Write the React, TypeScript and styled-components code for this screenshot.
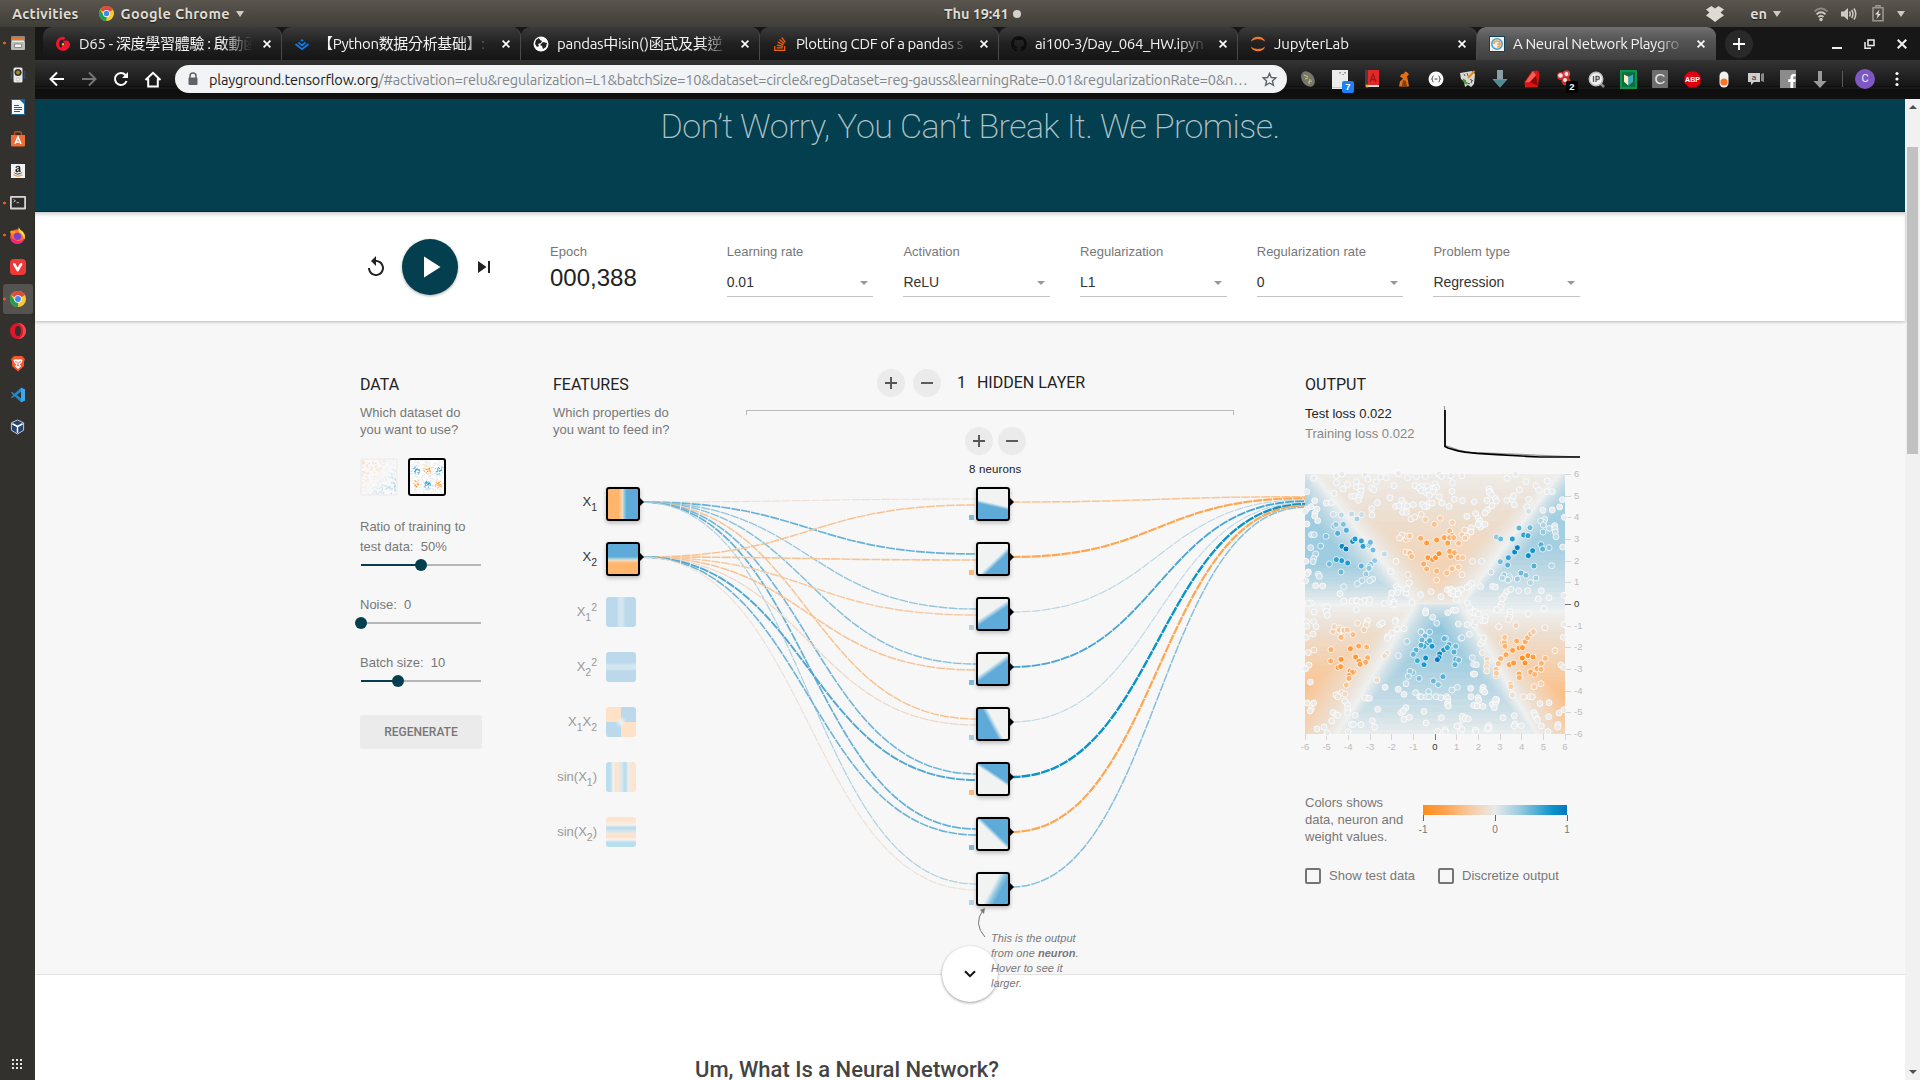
import React, { useEffect, useRef } from 'react';
import styled, { createGlobalStyle, css } from 'styled-components';
import { FaAmazon, FaFacebookF, FaGithub, FaStackOverflow } from 'react-icons/fa';

const UI = '"Ubuntu", "Noto Sans", "Noto Sans CJK TC", sans-serif';
const ARIAL = '"Helvetica", "Liberation Sans", Arial, sans-serif';
const ROBOTO = 'Roboto, sans-serif';
const TEAL = '#033f4f';

const GlobalStyle = createGlobalStyle`
  *, *::before, *::after { box-sizing: border-box; }
  html, body { margin: 0; padding: 0; overflow: hidden; }
  body { font-family: ${ARIAL}; background: #f7f7f7; }
  svg { display: block; flex: none; }
`;

/* ------------------------------------------------------------ desktop */

const Desktop = styled.div`
  width: 1920px;
  height: 1080px;
  display: flex;
  flex-direction: column;
  overflow: hidden;
`;

const TopBar = styled.header`
  height: 27px;
  flex: none;
  display: grid;
  grid-template-columns: 944px auto 1fr;
  align-items: center;
  background: linear-gradient(#5a564e, #403e39);
  color: #dfdbd2;
  font: 600 14.5px/26px ${UI};
  text-shadow: 0 1px 1px rgba(0, 0, 0, 0.6);
`;

const BarGroup = styled.div<{ $end?: boolean }>`
  display: flex;
  align-items: center;
  padding-left: 12px;
  ${(p) => p.$end && css`justify-content: flex-end; padding: 0 15px 0 0;`}
`;

const BarText = styled.span<{ $gap?: number; $track?: number }>`
  margin-left: ${(p) => p.$gap ?? 0}px;
  letter-spacing: ${(p) => p.$track ?? 0}px;
  white-space: nowrap;
`;

const BarIcon = styled.span<{ $gap: number }>`
  margin-left: ${(p) => p.$gap}px;
`;

const Caret = styled.span<{ $gap?: number }>`
  margin-left: ${(p) => p.$gap ?? 6}px;
  border: 4.5px solid transparent;
  border-top: 6px solid #cfcbc3;
  border-bottom: 0;
`;

const Clock = styled.div`
  display: flex;
  align-items: center;
  gap: 5px;
  letter-spacing: -0.1px;
`;

const ClockDot = styled.span`
  width: 8px;
  height: 8px;
  border-radius: 50%;
  background: #d5d1c9;
`;

const Workspace = styled.div`
  flex: 1;
  display: flex;
  min-height: 0;
`;

const Dock = styled.nav`
  width: 35px;
  flex: none;
  display: flex;
  flex-direction: column;
  align-items: center;
  background: #33312d;
`;

const DockItem = styled.div<{ $running?: boolean; $active?: boolean; $last?: boolean }>`
  width: 30px;
  height: 30px;
  margin: 1px 0;
  border-radius: 3px;
  display: flex;
  align-items: center;
  justify-content: center;
  background: ${(p) => (p.$active ? '#555350' : 'transparent')};
  ${(p) => p.$last && css`margin-top: auto;`}
  ${(p) => p.$running && css`
    background-image: radial-gradient(circle at 1.5px 15px, #e95420 1.2px, transparent 1.8px);
  `}
`;

/* ------------------------------------------------------------ browser */

const Browser = styled.section`
  flex: 1;
  min-width: 0;
  display: flex;
  flex-direction: column;
`;

const TabStrip = styled.div`
  height: 33px;
  flex: none;
  display: flex;
  align-items: stretch;
  background: #171717;
  padding-left: 8px;
`;

const TabBox = styled.div<{ $active?: boolean }>`
  width: 239px;
  position: relative;
  display: flex;
  align-items: center;
  padding: 1px 10px 0 12px;
  border-radius: 9px 9px 0 0;
  border-right: 1px solid ${(p) => (p.$active ? 'transparent' : '#4a4a4a')};
  background: ${(p) =>
    p.$active ? 'linear-gradient(#707070, #525252 45%, #414141)' : 'linear-gradient(#3b3b3b, #212121 50%, #151515)'};
  color: #f3f3f3;
`;

const TabTitle = styled.span<{ $track: number }>`
  flex: 1;
  margin: 0 9px 0 8px;
  overflow: hidden;
  white-space: pre;
  font: 400 15px/22px ${UI};
  letter-spacing: ${(p) => p.$track}px;
  -webkit-mask-image: linear-gradient(to right, #000 82%, transparent 99%);
  mask-image: linear-gradient(to right, #000 82%, transparent 99%);
`;

const NewTab = styled.div`
  width: 28px;
  height: 28px;
  margin: 3px 0 0 9px;
  border-radius: 50%;
  display: flex;
  align-items: center;
  justify-content: center;
  background: #292929;
`;

const WindowButtons = styled.div`
  margin-left: auto;
  display: flex;
  align-items: center;
  gap: 22px;
  padding-right: 13px;
`;

const Toolbar = styled.div`
  height: 39px;
  flex: none;
  display: flex;
  padding-left: 6px;
  background: linear-gradient(#343434, #161616 26px, #0b0b0b 27px, #242424 28px, #0e0e0e 29px, #101010);
`;

const NavSlot = styled.div<{ $gap?: number }>`
  width: 32px;
  height: 38px;
  margin-left: ${(p) => p.$gap ?? 0}px;
  display: flex;
  align-items: center;
  justify-content: center;
`;

const Omnibox = styled.div`
  width: 1112px;
  height: 28px;
  margin: 5px 0 0 6px;
  border-radius: 14px;
  padding: 0 10px 0 12px;
  display: flex;
  align-items: center;
  background: #f1f3f4;
`;

const Url = styled.span`
  flex: 1;
  margin-left: 10px;
  white-space: nowrap;
  font: 400 14.5px/27px ${UI};
  letter-spacing: -0.2px;
  color: #80868b;
`;

const Host = styled.span`
  color: #202124;
`;

const Extensions = styled.div`
  display: flex;
  margin-left: 5px;
`;

const ExtSlot = styled.div`
  width: 32px;
  height: 38px;
  position: relative;
  display: flex;
  align-items: center;
  justify-content: center;
`;

const ExtBadge = styled.span<{ $color: string }>`
  position: absolute;
  left: 18px;
  top: 21px;
  width: 12px;
  height: 12px;
  border-radius: 2px;
  background: ${(p) => p.$color};
  color: #fff;
  font: 700 9.5px/12px ${ARIAL};
  text-align: center;
`;

const ExtTile = styled.span<{ $bg: string; $fg?: string; $size?: number }>`
  width: 16px;
  height: 18px;
  border-radius: 1px;
  background: ${(p) => p.$bg};
  color: ${(p) => p.$fg ?? '#fff'};
  font: 400 ${(p) => p.$size ?? 12}px/18px ${ARIAL};
  text-align: center;
`;

const ToolbarRule = styled.span`
  width: 1px;
  height: 16px;
  margin: 11px 12px 0 6px;
  background: #5a5a5a;
`;

const Avatar = styled.div`
  width: 20px;
  height: 20px;
  margin-top: 9px;
  border-radius: 50%;
  background: #7e57c2;
  color: #f2eefa;
  font: 400 11px/20px ${ROBOTO};
  text-align: center;
`;

/* --------------------------------------------------------------- page */

const Viewport = styled.div`
  flex: 1;
  min-height: 0;
  display: flex;
`;

const Page = styled.main`
  width: 1870px;
  display: flex;
  flex-direction: column;
  background: #f7f7f7;
`;

const Hero = styled.div`
  height: 112.5px;
  flex: none;
  padding-top: 6px;
  background: ${TEAL};
  border-bottom: 1px solid #022c38;
  color: rgba(255, 255, 255, 0.7);
  font: 200 34px/42px ${ROBOTO};
  letter-spacing: -0.57px;
  text-align: center;
`;

const Controls = styled.div`
  height: 109.5px;
  flex: none;
  position: relative;
  display: flex;
  padding: 0 0 0 325px;
  background: #fff;
  box-shadow: inset 0 4px 4px -2px rgba(0, 0, 0, 0.22), 0 1px 3px rgba(0, 0, 0, 0.25);
`;

const Timeline = styled.div`
  width: 190px;
  flex: none;
  display: flex;
  align-items: center;
  padding: 1px 0 0 4px;
`;

const PlayButton = styled.div`
  width: 56px;
  height: 56px;
  margin: 0 13.5px 0 14px;
  border-radius: 50%;
  display: flex;
  align-items: center;
  justify-content: center;
  background: ${TEAL};
  box-shadow: 0 1px 3px rgba(0, 0, 0, 0.35);
`;

const Field = styled.div`
  width: 176.7px;
  flex: none;
  padding: 31.5px 30px 0 0;
`;

const FieldLabel = styled.div`
  font: 400 13px/17px ${ARIAL};
  color: #777;
`;

const Epoch = styled.div`
  margin-top: 6px;
  font: 400 24px/24px ${ARIAL};
  color: #222;
`;

const Select = styled.div`
  height: 24px;
  margin-top: 13px;
  display: flex;
  align-items: center;
  padding: 0 4px 5px 0;
  border-bottom: 1px solid #c4c4c4;
  font: 400 14px/17px ${ARIAL};
  color: #333;
`;

const SelectCaret = styled.span`
  margin: 2px 1px 0 auto;
  border: 4px solid transparent;
  border-top: 4.5px solid #999;
  border-bottom: 0;
`;

const Main = styled.div`
  height: 653px;
  flex: none;
  display: flex;
  padding: 0 325px;
`;

const ColumnTitle = styled.h4`
  margin: 0;
  padding-top: 54px;
  font: 400 16px/20px ${ROBOTO};
  color: #222;
`;

const Hint = styled.p`
  margin: 0;
  padding-top: 9px;
  font: 400 13px/17px ${ARIAL};
  color: #777;
`;

const DataColumn = styled.section`
  width: 193px;
  flex: none;
`;

const Thumbs = styled.div`
  display: flex;
  gap: 10px;
  margin-top: 20px;
`;

const Thumb = styled.div<{ $on?: boolean }>`
  width: 38px;
  height: 38px;
  border-radius: 3px;
  overflow: hidden;
  border: 2px solid ${(p) => (p.$on ? '#000' : '#f0f0f0')};
  background: ${(p) => (p.$on ? '#fff' : '#f8f8f8')};
`;

const SliderBlock = styled.div<{ $top: number }>`
  width: 122px;
  padding-top: ${(p) => p.$top}px;
  font: 400 13px/20px ${ARIAL};
  color: #777;
  white-space: pre;
`;

const Track = styled.div<{ $at: number }>`
  height: 12px;
  margin: 2px 0 0 1px;
  width: 120px;
  background: linear-gradient(${TEAL}, ${TEAL}) left center / ${(p) => p.$at}px 2px no-repeat,
    linear-gradient(#b6b6b6, #b6b6b6) center / 100% 2px no-repeat;
`;

const Knob = styled.div<{ $at: number }>`
  width: 12px;
  height: 12px;
  border-radius: 50%;
  background: ${TEAL};
  margin-left: ${(p) => p.$at - 6}px;
`;

const Regenerate = styled.div`
  width: 122px;
  height: 34px;
  margin-top: 28px;
  border-radius: 2px;
  background: #ebebeb;
  color: #777;
  font: 500 12px/34px ${ROBOTO};
  text-align: center;
`;

const NetworkArea = styled.section`
  width: 752px;
  flex: none;
  position: relative;
`;

const NetworkHead = styled.div`
  display: flex;
`;

const FeatureHead = styled.div`
  width: 193px;
`;

const HiddenHead = styled.div`
  width: 488px;
  padding-top: 48px;
`;

const LayerControls = styled.div`
  display: flex;
  align-items: center;
  padding-left: 131px;
  font: 400 16px/28px ${ROBOTO};
  color: #222;
  white-space: pre;
`;

const RoundButton = styled.span<{ $gap?: number }>`
  width: 28px;
  height: 28px;
  margin-right: ${(p) => p.$gap ?? 0}px;
  border-radius: 50%;
  background: #ebebeb;
  display: flex;
  align-items: center;
  justify-content: center;
`;

const Bracket = styled.div`
  height: 5px;
  margin-top: 13px;
  border: 1px solid #bbb;
  border-bottom: 0;
`;

const NeuronControls = styled.div`
  display: flex;
  padding: 12px 0 0 219px;
`;

const NeuronCount = styled.div`
  padding: 7px 0 0 223px;
  font: 400 11.5px/14px ${ARIAL};
  letter-spacing: 0.15px;
  color: #222;
`;

const Links = styled.svg`
  position: absolute;
  left: 87px;
  top: 161px;
`;

const FeatureTag = styled.div<{ $y: number; $on?: boolean }>`
  position: absolute;
  right: 708px;
  top: ${(p) => p.$y - 9}px;
  font: 400 13px/18px ${ARIAL};
  color: ${(p) => (p.$on ? '#333' : '#999')};
  white-space: nowrap;
  sub, sup { font-size: 10.5px; line-height: 0; }
  sub { vertical-align: -4.5px; }
  sup { vertical-align: 5px; }
`;

const FeatureNode = styled.div<{ $y: number; $on?: boolean; $fill: string }>`
  position: absolute;
  left: 53px;
  top: ${(p) => p.$y - 15}px;
  width: ${(p) => (p.$on ? 34 : 30)}px;
  height: ${(p) => (p.$on ? 34 : 30)}px;
  border-radius: 3px;
  ${(p) => p.$on && css`border: 2px solid #000; box-shadow: 0 2px 4px rgba(0, 0, 0, 0.25);`}
  background: ${(p) => p.$fill};
`;

const NeuronNode = styled.div<{ $y: number; $fill: string }>`
  position: absolute;
  left: 423px;
  top: ${(p) => p.$y - 15}px;
  width: 34px;
  height: 34px;
  border-radius: 3px;
  border: 2px solid #000;
  box-shadow: 0 2px 4px rgba(0, 0, 0, 0.25);
  background: ${(p) => p.$fill};
`;

const Bias = styled.span<{ $y: number; $color: string }>`
  position: absolute;
  left: 416px;
  top: ${(p) => p.$y + 13}px;
  width: 5px;
  height: 5px;
  background: ${(p) => p.$color};
`;

const Callout = styled.div`
  position: absolute;
  z-index: 3;
  left: 438px;
  top: 610px;
  width: 100px;
  font: italic 400 11px/15px ${ARIAL};
  letter-spacing: 0.05px;
  color: #777;
`;

const CalloutArrow = styled.svg`
  position: absolute;
  z-index: 3;
  left: 420px;
  top: 584px;
`;

const OutputColumn = styled.section`
  width: 275px;
  flex: none;
`;

const LossRow = styled.div`
  display: flex;
  justify-content: space-between;
  height: 63px;
`;

const Losses = styled.div`
  padding-top: 9px;
  font: 400 13px/20px ${ARIAL};
  color: #888;
`;

const LossPlot = styled.div`
  padding-top: 9px;
`;

const TestLoss = styled.div`
  color: #222;
`;

const PlotRow = styled.div`
  display: flex;
  height: 260px;
  margin-top: 16px;
`;

const Plot = styled.div`
  width: 260px;
  height: 260px;
  position: relative;
`;

const Heat = styled.canvas`
  width: 260px;
  height: 260px;
  display: block;
`;

const Overlay = styled.svg`
  position: absolute;
  left: -5px;
  top: -5px;
`;

const SideAxis = styled.svg`
  margin-top: -8px;
`;

const BaseAxis = styled.svg`
  margin-left: -5px;
`;

const LegendRow = styled.div`
  display: flex;
  margin-top: 40px;
`;

const LegendText = styled.div`
  width: 112px;
  font: 400 13px/17px ${ARIAL};
  color: #777;
`;

const LegendScale = styled.svg`
  margin-top: 3px;
`;

const Checks = styled.div`
  display: flex;
  margin-top: 22px;
  font: 400 13px/17px ${ARIAL};
  color: #777;
`;

const Check = styled.div<{ $w: number }>`
  width: ${(p) => p.$w}px;
  display: flex;
  align-items: center;
  gap: 8px;
  white-space: nowrap;
`;

const Box = styled.span`
  width: 16px;
  height: 16px;
  border: 2px solid #757575;
  border-radius: 2px;
`;

const Article = styled.section`
  flex: 1;
  position: relative;
  background: #fff;
  border-top: 1px solid #e2e2e2;
  padding: 81px 0 0 660px;
  font: 500 22px/28px ${ROBOTO};
  color: #444;
  white-space: nowrap;
`;

const MoreButton = styled.div`
  position: absolute;
  left: 907px;
  top: -29px;
  width: 56px;
  height: 56px;
  border-radius: 50%;
  background: #fff;
  box-shadow: 0 1px 3px rgba(0, 0, 0, 0.4);
  display: flex;
  align-items: center;
  justify-content: center;
`;

const ScrollBar = styled.div`
  width: 15px;
  display: flex;
  flex-direction: column;
  justify-content: space-between;
  align-items: center;
  background: #f1f1f1;
`;

const ScrollThumb = styled.div`
  width: 11px;
  height: 307px;
  margin: 32px 0 auto;
  background: #c1c1c1;
`;

const ScrollArrow = styled.div<{ $down?: boolean }>`
  height: 16px;
  padding-top: 6px;
  &::after {
    content: '';
    display: block;
    border: 4px solid transparent;
    ${(p) => (p.$down ? 'border-top: 4px solid #505050; border-bottom: 0;' : 'border-bottom: 4px solid #505050; border-top: 0;')}
  }
`;

/* -------------------------------------------------------------- icons */

const ChromeLogo = ({ size = 16 }: { size?: number }) => (
  <svg width={size} height={size} viewBox="0 0 24 24">
    <circle cx="12" cy="12" r="12" fill="#fcc934" />
    <path d="M12 12L1.6 6A12 12 0 0 1 22.4 6z" fill="#dd4b3e" />
    <path d="M1.6 6L7 14.5 12 17v7A12 12 0 0 1 1.6 6z" fill="#1e9e58" />
    <circle cx="12" cy="12" r="5.6" fill="#fff" />
    <circle cx="12" cy="12" r="4.4" fill="#4285f4" />
  </svg>
);

const CloseGlyph = ({ color = '#fff', size = 8 }: { color?: string; size?: number }) => (
  <svg width={size} height={size} viewBox="0 0 8 8" stroke={color} strokeWidth="1.7">
    <path d="M.6.6l6.8 6.8M7.4.6L.6 7.4" />
  </svg>
);

const Plus = () => (
  <svg width="14" height="14" viewBox="0 0 14 14" stroke="#555" strokeWidth="1.9">
    <path d="M1 7h12M7 1v12" />
  </svg>
);

const Minus = () => (
  <svg width="14" height="14" viewBox="0 0 14 14" stroke="#555" strokeWidth="1.9">
    <path d="M1 7h12" />
  </svg>
);

const DropboxMark = () => (
  <svg width="18" height="18" viewBox="0 0 18 18" fill="#dfdbd2">
    <path d="M5.500 1L9 3.500 12.500 1 18 4.500 14.500 7.500 18 10.500 13.500 13.500 9 17 4.500 13.500 0 10.500 3.500 7.500 0 4.500z" />
  </svg>
);

const WifiMark = () => (
  <svg width="16" height="16" viewBox="0 0 16 16" fill="none" strokeWidth="1.800">
    <path d="M1.500 5.500Q8-.5 14.500 5.500" stroke="#8b877f" />
    <path d="M3.500 8.300Q8 4.300 12.500 8.300" stroke="#cfcbc3" />
    <path d="M5.500 11Q8 8.800 10.500 11" stroke="#cfcbc3" />
    <circle cx="8" cy="13.500" r="1.700" fill="#cfcbc3" />
  </svg>
);

const VolumeMark = () => (
  <svg width="17" height="16" viewBox="0 0 17 16" fill="none" stroke="#cfcbc3" strokeWidth="1.500">
    <path d="M1 5.500h3L8 2v12L4 10.500H1z" fill="#cfcbc3" stroke="none" />
    <path d="M9.500 5.500q1.500 2.500 0 5M11.700 4q2.500 4 0 8M14 2.500q3.500 5.500 0 11" />
  </svg>
);

const BatteryMark = () => (
  <svg width="12" height="17" viewBox="0 0 12 17" fill="none">
    <path d="M4 2V.8h4V2M1 2.700h10v13H1z" stroke="#9b978f" strokeWidth="1.600" />
    <path d="M7.500 4.500L3 9.500h2.700L4.500 14 9 8.800H6.300z" fill="#dfdbd2" />
  </svg>
);

const dockItems: { icon: React.ReactNode; running?: boolean; active?: boolean }[] = [
  {
    running: true,
    icon: (
      <svg width="16" height="16" viewBox="0 0 16 16">
        <path d="M1 2q0-1 1-1h12q1 0 1 1v5H1z" fill="#8c8a86" />
        <path d="M2 3h12v2H2z" fill="#f0772b" />
        <path d="M2 5.500h12V7H2z" fill="#f5ead9" />
        <path d="M1 7h14v7q0 1-1 1H2q-1 0-1-1z" fill="#bdbbb6" />
        <path d="M4.500 9h7v3.500h-7z" fill="#f4f3f1" stroke="#777" strokeWidth=".8" />
      </svg>
    ),
  },
  {
    icon: (
      <svg width="16" height="16" viewBox="0 0 16 16">
        <path d="M1.500 4v8M14.500 4v8" stroke="#344a6a" strokeWidth="1.500" />
        <rect x="3.500" y=".5" width="9" height="15" rx="1.500" fill="#e9e9e6" />
        <circle cx="8" cy="5.500" r="3.600" fill="#34322e" />
        <circle cx="8" cy="5.500" r="1.900" fill="#a58d20" />
        <circle cx="8" cy="12.500" r="1.600" fill="#f9f9f9" stroke="#aaa" strokeWidth=".6" />
      </svg>
    ),
  },
  {
    icon: (
      <svg width="16" height="16" viewBox="0 0 16 16">
        <path d="M1.500.500h8.500l4.500 4.500v10.500h-13z" fill="#f5f8fa" stroke="#1f6394" />
        <path d="M10 0h5v5z" fill="#0f67a6" />
        <path d="M4 6.500h5M4 8.500h8M4 10.500h8M4 12.500h6" stroke="#0f67a6" strokeWidth="1.100" />
      </svg>
    ),
  },
  {
    icon: (
      <svg width="16" height="16" viewBox="0 0 16 16">
        <path d="M4.500 5V2.500q0-1.700 1.700-1.700h3.600q1.700 0 1.700 1.700V5" fill="none" stroke="#c4471a" strokeWidth="1.500" />
        <path d="M1 4h14v10q0 1.500-1 1.500H2q-1 0-1-1.500z" fill="#ee6d36" />
        <path d="M5 13L8 6l3 7M5 11h6" fill="none" stroke="#fff" strokeWidth="1.500" />
      </svg>
    ),
  },
  {
    icon: (
      <svg width="14" height="14" viewBox="0 0 14 14">
        <rect width="14" height="14" fill="#f2f2f2" />
        <g transform="translate(2 1)" color="#222">
          <FaAmazon size={10} />
        </g>
        <path d="M2.500 10.800q4.500 2.600 9 0" fill="none" stroke="#f7981d" strokeWidth="1.300" />
      </svg>
    ),
  },
  {
    running: true,
    icon: (
      <svg width="16" height="14" viewBox="0 0 16 14">
        <rect width="16" height="13.500" rx="1" fill="#d4d4d2" />
        <rect x="1.800" y="1.800" width="12.400" height="9.700" fill="#2c2c2a" />
        <path d="M3.500 3.500l2 1.300-2 1.300M6.500 6.700h2.500" stroke="#ddd" strokeWidth=".8" fill="none" />
      </svg>
    ),
  },
  {
    running: true,
    icon: (
      <svg width="17" height="17" viewBox="0 0 16 16">
        <circle cx="8" cy="9" r="6.800" fill="#ff6a2b" />
        <path d="M1.200 9q0 6.800 6.800 6.800 5 0 6.500-4.800-3 3-7 2-4-1-6.300-4z" fill="#f6237d" />
        <path d="M9 0q1 2.500 4 4.500 3 3 1.500 7.500-2-6-5.500-7z" fill="#ffd83a" />
        <circle cx="8" cy="8.800" r="3.400" fill="#7443d6" />
        <path d="M1 4q3-2 6 1-2 0-3 2-3 0-3-3z" fill="#ff9a22" />
      </svg>
    ),
  },
  {
    icon: (
      <svg width="16" height="16" viewBox="0 0 16 16">
        <rect width="16" height="16" rx="4" fill="#ef3939" />
        <path d="M4.200 5.200l3.500 6 3.400-6" fill="none" stroke="#fff" strokeWidth="2.500" strokeLinecap="round" strokeLinejoin="round" />
      </svg>
    ),
  },
  { running: true, active: true, icon: <ChromeLogo /> },
  {
    icon: (
      <svg width="16" height="16" viewBox="0 0 16 16">
        <circle cx="8" cy="8" r="8" fill="#e3152b" />
        <path d="M8 0a8 8 0 0 1 0 16q5-2 5-8T8 0z" fill="#f2484d" />
        <ellipse cx="8" cy="8" rx="3" ry="5.300" fill="#33312d" />
      </svg>
    ),
  },
  {
    icon: (
      <svg width="16" height="17" viewBox="0 0 16 17">
        <path d="M4 1h8l3 3-1 3 0 4-6 5.500L2 11V7L1 4z" fill="#fb542b" />
        <path d="M3.500 5l2-1L8 4.500l2.500-.5 2 1-.8 2.600-1.700 2L11 11.500 8 14l-3-2.500 1-1.900-1.700-2z" fill="#fff" />
        <path d="M5 6.500l2 .8M11 6.500l-2 .8M8 7v3M6.500 11L8 10l1.500 1" stroke="#fb542b" strokeWidth=".9" fill="none" />
      </svg>
    ),
  },
  {
    icon: (
      <svg width="16" height="16" viewBox="0 0 16 16">
        <path d="M11 .8L15 2.500v11L11 15.200 4.500 9.300 2 11.200l-1-.7L3.300 8 1 5.500l1-.7 2.500 1.900z" fill="#2489ca" />
        <path d="M11 4.800v6.400L6.800 8z" fill="#33312d" />
        <path d="M11 .8L15 2.500v11L11 15.200z" fill="#3ea8ee" />
      </svg>
    ),
  },
  {
    icon: (
      <svg width="15" height="16" viewBox="0 0 16 16">
        <path d="M8 .5l6.500 3v8L8 15.500l-6.500-4v-8z" fill="#24446f" stroke="#c6d3e2" strokeWidth="1" />
        <path d="M2.500 4.500L8 7.500l5.500-3M8 7.500V14" stroke="#fff" strokeWidth="1.600" fill="none" />
      </svg>
    ),
  },
];

/* --------------------------------------------------------------- tabs */

const tabs: { title: string; track: number; icon: React.ReactNode; active?: boolean }[] = [
  {
    title: 'D65 - 深度學習體驗 : 啟動函',
    track: -0.3,
    icon: (
      <svg width="16" height="16" viewBox="0 0 16 16">
        <path d="M8.500 2.200A5.600 5.600 0 1 0 13.600 8.500Q13 5.500 10.500 6A3 3 0 0 1 8 11" fill="none" stroke="#f0162f" strokeWidth="3" strokeLinecap="round" />
        <circle cx="8" cy="8.300" r="1.200" fill="#ffb52e" />
      </svg>
    ),
  },
  {
    title: '【Python数据分析基础】:',
    track: -0.35,
    icon: (
      <svg width="16" height="16" viewBox="0 0 16 16" stroke="#0e7df0" strokeWidth="1.700" fill="none">
        <path d="M1.500 8L8 13.200 14.500 8M4.500 6.500L8 9.300l3.500-2.800M7 3.800l1 .8 1-.8" />
      </svg>
    ),
  },
  {
    title: 'pandas中isin()函式及其逆',
    track: -0.3,
    icon: (
      <svg width="16" height="16" viewBox="0 0 16 16">
        <circle cx="8" cy="8" r="7.500" fill="#fff" />
        <path d="M3 4l3-2 1 2 2 1-1 2-3 1 1 2-2 1-2-3zM10 6l4 1-1 4-3 2-1-3-2-1z" fill="#222" />
      </svg>
    ),
  },
  { title: 'Plotting CDF of a pandas s', track: -0.35, icon: <FaStackOverflow size={16} color="#f2630f" /> },
  { title: 'ai100-3/Day_064_HW.ipyn', track: -0.35, icon: <FaGithub size={16} color="#0c0c0c" /> },
  {
    title: 'JupyterLab',
    track: -0.1,
    icon: (
      <svg width="16" height="18" viewBox="0 0 16 18" fill="#f37726">
        <path d="M.8 6.500a7.500 6.500 0 0 1 14.400 0Q12 4 8 4T.8 6.500zM.8 11.500a7.500 6.500 0 0 0 14.400 0Q12 14 8 14T.8 11.500z" />
      </svg>
    ),
  },
  {
    title: 'A Neural Network Playgro',
    track: -0.35,
    active: true,
    icon: (
      <svg width="16" height="16" viewBox="0 0 16 16">
        <rect width="16" height="16" fill="#14405a" />
        <rect x="1" y="1" width="14" height="14" fill="#f4f1ea" />
        <circle cx="8" cy="8" r="5.200" fill="none" stroke="#4aa3cf" strokeWidth="1.600" />
        <path d="M5 8a3 3 0 1 1 3 3M8 8h2" fill="none" stroke="#f4a14c" strokeWidth="1.600" />
      </svg>
    ),
  },
];

const extensions: React.ReactNode[] = [
  <svg width="16" height="18" viewBox="0 0 16 18">
    <ellipse cx="8" cy="9" rx="6" ry="8.500" fill="#77766c" transform="rotate(-35 8 9)" />
    <path d="M4 5l4 2M5 9l3-1M8 12l4-1M9 14l1-5" stroke="#c5bd62" strokeWidth="1.200" />
  </svg>,
  <>
    <svg width="16" height="19" viewBox="0 0 16 19">
      <rect width="16" height="19" fill="#ebebeb" />
      <path d="M8 2v1.500M13 2v1.500M11 4v1" stroke="#777" strokeWidth="1.300" />
      <path d="M0 17.500h16" stroke="#c8c8c8" />
    </svg>
    <ExtBadge $color="#1a82f7">7</ExtBadge>
  </>,
  <svg width="14" height="18" viewBox="0 0 14 18">
    <rect width="14" height="16" fill="#e02a2a" />
    <rect width="3" height="16" fill="#4d3b3b" />
    <path d="M5 12l3-8 3 8M6 9.500h4" fill="none" stroke="#a01515" strokeWidth="1.300" />
    <path d="M1 15h13v2H2z" fill="#ddd" />
    <circle cx="2" cy="16" r="1.500" fill="#f0b21c" />
  </svg>,
  <svg width="12" height="16" viewBox="0 0 12 16">
    <path d="M7 .5q3 .5 4 3l-2 2 1 4 1 6H1l1-5 3-3-3-2 1-2 3-1z" fill="#e0701a" />
    <path d="M5 9l3 1 1 5H4z" fill="#8a3d0c" />
  </svg>,
  <svg width="16" height="16" viewBox="0 0 16 16">
    <circle cx="8" cy="8" r="7.500" fill="#fafafa" />
    <path d="M5.500 5q-1 0-1 1.500T3.500 8q1 0 1 1.500t1 1.500M10.500 5q1 0 1 1.500t1 1.500q-1 0-1 1.500t-1 1.500M6.500 8h3" stroke="#444" fill="none" />
  </svg>,
  <svg width="16" height="18" viewBox="0 0 16 18">
    <path d="M0 3l12-2 3 3-1 10-3 3-3-2-3 2-1-6-3-2z" fill="#d8d8d4" />
    <path d="M4 4l1 2M7 3l1 3M3 9l3 2M10 9l3 2M7 13l3 1M11 13l1-3" stroke="#555" />
    <path d="M14.500 1L8 8" stroke="#e08a22" strokeWidth="2" />
    <path d="M3 10l4 4" stroke="#4f9a35" strokeWidth="2" />
  </svg>,
  <svg width="16" height="18" viewBox="0 0 16 18">
    <path d="M5 0h6v9h4.500L8 17.500.5 9H5z" fill="#8aa0a6" />
    <path d="M1 9.500h14L8 17.500z" fill="#4e8b92" />
  </svg>,
  <svg width="16" height="18" viewBox="0 0 16 18">
    <path d="M8 1l6-.5 1.500 3.500L14 17 1 17.500 .5 12z" fill="#d81414" />
    <path d="M9 1l3 4-6 7-5 .500z" fill="#f0605a" />
    <path d="M6 12l8 4-2-10z" fill="#8d0909" />
  </svg>,
  <>
    <svg width="16" height="18" viewBox="0 0 16 18">
      <circle cx="5" cy="6" r="4" fill="#c93030" />
      <circle cx="10.500" cy="4" r="3.700" fill="#d64545" />
      <circle cx="10" cy="11" r="4.500" fill="#c93030" />
      <circle cx="4.500" cy="5.500" r="2.300" fill="#f6e8e8" />
      <circle cx="10.500" cy="4" r="1.900" fill="#f6e8e8" />
      <circle cx="9" cy="10" r="2" fill="#f6e8e8" />
    </svg>
    <ExtBadge $color="#000">2</ExtBadge>
  </>,
  <svg width="17" height="17" viewBox="0 0 17 17">
    <path d="M11 11l5 5" stroke="#8a8a8a" strokeWidth="2.500" />
    <circle cx="8" cy="8" r="6.800" fill="#f0f0f0" stroke="#b9b9b9" strokeWidth="1.400" />
    <path d="M5.500 5v6M8 11V5.500h1.800q1.600 0 1.600 1.500T9.800 8.500H8" stroke="#555" strokeWidth="1.300" fill="none" />
  </svg>,
  <svg width="17" height="19" viewBox="0 0 17 17" preserveAspectRatio="none">
    <rect width="17" height="17" fill="#11924e" />
    <rect x="2" y="2" width="13" height="13" fill="#0b6e3b" />
    <path d="M4 4l4.500 2v8L4 10.500z" fill="#f6f1c5" />
    <path d="M13 4L8.500 6v8l4.500-3.500z" fill="#3aa7c9" />
  </svg>,
  <ExtTile $bg="#6e6e6e" $fg="#e8e8e8" $size={15}>C</ExtTile>,
  <svg width="17" height="17" viewBox="0 0 17 17">
    <path d="M5 .5h7L16.500 5v7L12 16.500H5L.5 12V5z" fill="#e1000f" />
    <text x="8.500" y="11.400" fontSize="7" fontWeight="700" fontFamily="Liberation Sans" textAnchor="middle" fill="#fff">ABP</text>
  </svg>,
  <svg width="16" height="17" viewBox="0 0 16 17">
    <rect x="3.500" y=".5" width="9" height="16" rx="4.500" fill="#f2f2f2" />
    <circle cx="8" cy="11" r="3.600" fill="#fb7326" />
  </svg>,
  <svg width="17" height="16" viewBox="0 0 17 16">
    <path d="M0 2h12v9H6l-3 3v-3H0z" fill="#cfcfcf" />
    <path d="M13 3l3-1v9l-3-1z" fill="#888" />
    <text x="6" y="9" fontSize="8" fontFamily="Liberation Sans" textAnchor="middle" fill="#333">a</text>
  </svg>,
  <svg width="16" height="18" viewBox="0 0 16 18">
    <rect width="16" height="18" fill="#8b8b8b" />
    <g transform="translate(5 4)" color="#fff">
      <FaFacebookF size={14} />
    </g>
  </svg>,
  <svg width="14" height="17" viewBox="0 0 14 17">
    <path d="M5 0h4v10h4.500L7 17 .5 10H5z" fill="#9a9a9a" />
  </svg>,
];

/* ------------------------------------------------------------ network */

const ORANGE = '#ffb56b';
const BLUE = '#5eabd9';
const PALE = '#f1f3f3';

const features: { label: React.ReactNode; on?: boolean; fill: string }[] = [
  {
    label: <>X<sub>1</sub></>,
    on: true,
    fill: `linear-gradient(to right, ${ORANGE} 36%, #f0dcc4 48%, #8fcbe4 54%, ${BLUE} 62%)`,
  },
  {
    label: <>X<sub>2</sub></>,
    on: true,
    fill: `linear-gradient(to bottom, ${BLUE} 42%, #76c3e0 46%, #f0dcc4 54%, ${ORANGE} 64%)`,
  },
  {
    label: <>X<sub>1</sub><sup>2</sup></>,
    fill: 'linear-gradient(to right, #bcd9eb 36%, #d2e7ef 44%, #d2e7ef 56%, #bcd9eb 64%)',
  },
  {
    label: <>X<sub>2</sub><sup>2</sup></>,
    fill: 'linear-gradient(to bottom, #bcd9eb 36%, #d2e7ef 44%, #d2e7ef 56%, #bcd9eb 64%)',
  },
  {
    label: <>X<sub>1</sub>X<sub>2</sub></>,
    fill: `radial-gradient(circle, #f2f2f0 0, rgba(242,242,240,0) 6px), conic-gradient(#bcd9eb 0 25%, #fee1c6 25% 50%, #bcd9eb 50% 75%, #fee1c6 75%)`,
  },
  {
    label: <>sin(X<sub>1</sub>)</>,
    fill: 'linear-gradient(to right, #b9dfee 14%, #f4f2ee 25%, #fee1c9 32%, #fbe5d3 40%, #d5e8f0 52%, #b9dbea 64%, #e8eff2 75%, #fee4cf 84%)',
  },
  {
    label: <>sin(X<sub>2</sub>)</>,
    fill: 'linear-gradient(to bottom, #fee4cf 12%, #f3f2ef 26%, #b9dbea 36%, #d5e8f0 48%, #fbe5d3 58%, #fee1c6 64%, #f4f2ee 76%, #b9dfee 84%)',
  },
];

const neurons: { fill: string; bias: string; out: [string, number] }[] = [
  { fill: `linear-gradient(193deg, ${PALE} 48%, ${BLUE} 57%)`, bias: '#7fb9da', out: ['#fac490', 1.5] },
  { fill: `linear-gradient(136deg, ${PALE} 54%, ${BLUE} 64%)`, bias: '#fbb878', out: ['#fea650', 2.2] },
  { fill: `linear-gradient(146deg, ${PALE} 42%, #9cc9e4 49%, ${BLUE} 54%)`, bias: '#b4d2e2', out: ['#b9d7e4', 1.1] },
  { fill: `linear-gradient(144deg, ${PALE} 42%, #9cc9e4 49%, ${BLUE} 54%)`, bias: '#7fb9da', out: ['#4aa6d0', 1.9] },
  { fill: `linear-gradient(62deg, ${BLUE} 44%, ${PALE} 56%)`, bias: '#a9cee0', out: ['#bcd8e4', 1.1] },
  { fill: `linear-gradient(34deg, ${PALE} 55%, ${BLUE} 63%)`, bias: '#fbb878', out: ['#0b93c9', 2.4] },
  { fill: `linear-gradient(44deg, ${PALE} 48%, ${BLUE} 57%)`, bias: '#7fb9da', out: ['#fea650', 2.2] },
  { fill: `linear-gradient(118deg, ${PALE} 46%, #8cc3e0 60%, ${BLUE} 70%)`, bias: '#b4d2e2', out: ['#86bfdc', 1.5] },
];

const inputLinks: [string, number][][] = [
  [
    ['#ecdfd5', 1.1],
    ['#66b1d6', 1.7],
    ['#93c5dc', 1.35],
    ['#86bfda', 1.45],
    ['#f8c393', 1.5],
    ['#72b6d8', 1.6],
    ['#66b1d6', 1.7],
    ['#aed1e0', 1.2],
  ],
  [
    ['#f8c393', 1.5],
    ['#f8c393', 1.6],
    ['#f6c9a0', 1.45],
    ['#f8c393', 1.5],
    ['#f0d5c0', 1.2],
    ['#4fa8d2', 1.9],
    ['#6db4d7', 1.6],
    ['#ecdfd5', 1.1],
  ],
];

const ROW = 55;
const curve = (x1: number, y1: number, x2: number, y2: number) => {
  const mid = (x1 + x2) / 2;
  return `M${x1},${y1}C${mid},${y1} ${mid},${y2} ${x2},${y2}`;
};

const NetworkLinks = () => (
  <Links width="665" height="430" viewBox="640 482 665 430" fill="none">
    {inputLinks.flatMap((row, f) =>
      row.map(([color, width], n) => (
        <path
          key={`${f}-${n}`}
          d={curve(641, 502 + f * ROW, 976, 502 + n * ROW + (f ? 3 : -3))}
          stroke={color}
          strokeWidth={width}
          strokeDasharray="9 1"
          strokeDashoffset="-0.5"
        />
      )),
    )}
    {neurons.map(({ out }, n) => (
      <path
        key={n}
        d={curve(1011, 502 + n * ROW, 1305, 502 + ((n - 3.5) / 8) * 12)}
        stroke={out[0]}
        strokeWidth={out[1]}
        strokeDasharray="9 1"
        strokeDashoffset="-0.5"
      />
    ))}
    {[0, 1].map((f) => (
      <path key={f} d={`M640,${498 + f * ROW}l4,4-4,4z`} fill="#000" />
    ))}
    {neurons.map((_, n) => (
      <path key={n} d={`M1010,${498 + n * ROW}l4,4-4,4z`} fill="#000" />
    ))}
  </Links>
);

/* -------------------------------------------------------------- output */

const stops: [number, number[]][] = [
  [-1, [255, 140, 24]],
  [-0.7, [255, 163, 77]],
  [-0.35, [247, 202, 160]],
  [0, [232, 234, 235]],
  [0.35, [152, 202, 223]],
  [0.8, [10, 147, 202]],
  [1, [8, 119, 189]],
];

const shade = (value: number) => {
  const v = Math.max(-1, Math.min(1, value));
  let i = 1;
  while (i < stops.length - 1 && v > stops[i][0]) i += 1;
  const [a, ca] = stops[i - 1];
  const [b, cb] = stops[i];
  const t = (v - a) / (b - a);
  return ca.map((c, k) => Math.round(c + (cb[k] - c) * t));
};

const along = (table: number[], t: number) => {
  const i = Math.min(table.length - 2, Math.floor(t));
  return table[i] + (table[i + 1] - table[i]) * (t - i);
};

/* Strength down the middle of the two wedges, by distance from the axis. */
const upperWedge = [0.02, 0.25, 0.24, 0.18, 0.13, 0.08, 0.03];
const lowerWedge = [0.06, 0.38, 0.33, 0.27, 0.19, 0.11, 0.02];

const output = (x: number, y: number) => {
  if (y > 0) {
    const left = -0.92 - 0.78 * y;
    const right = 1.2 + 0.75 * y;
    if (x < left) return Math.min(0.17 * y, 0.2 * (left - x), 0.33);
    if (x > right) return Math.min(0.03 + 0.1 * y, 0.26 * (x - right), 0.3);
    return -Math.min(along(upperWedge, y), 0.13 * Math.min(x - left, right - x));
  }
  const depth = -y;
  const left = -0.92 - 0.6 * depth;
  const right = 1.2 + 0.58 * depth;
  if (x < left) return -Math.min(0.11 * depth, 0.15 * (left - x));
  if (x > right) return -Math.min(0.12 * depth - 0.04, 0.2 * (x - right));
  return Math.min(along(lowerWedge, depth), 0.24 * Math.min(x - left, right - x));
};

const Heatmap = () => {
  const ref = useRef<HTMLCanvasElement>(null);
  useEffect(() => {
    const ctx = ref.current?.getContext('2d');
    if (!ctx) return;
    const image = ctx.createImageData(260, 260);
    for (let y = 0; y < 260; y += 1) {
      for (let x = 0; x < 260; x += 1) {
        const value = output((x / 260) * 12 - 6, 6 - (y / 260) * 12);
        const [r, g, b] = shade(Math.round(value * 40) / 40);
        const near = Math.max(0, 1 - Math.abs(value) * 9) * 7;
        const at = (y * 260 + x) * 4;
        image.data.set([r + near, g + near * 0.9, b + near * 0.7, 255], at);
      }
    }
    ctx.putImageData(image, 0, 0);
  }, []);
  return <Heat ref={ref} width={260} height={260} />;
};

/* Training points, three units to the pixel. */
const points = `
41,37 109,30 125,24 109,50 169,47 195,27 204,39 143,55 242,33 229,47 259,35 295,23 323,35 349,32 376,31 282,59 345,59 364,60
417,24 425,31 453,29 486,29 405,54 403,67 457,50 410,64 400,69 388,66 382,60 357,66 364,74 377,79 386,74 399,78 456,76
647,25 621,37 678,47 741,45 567,69 570,76 658,72 708,59 716,73 741,77 757,77 20,77 129,69 169,63 183,62 183,75 215,66 222,71
102,82 155,91 164,90 180,87 176,94 175,103 232,110 270,95 215,128 305,103 313,113 287,121 297,119 313,119 322,120 340,116
308,139 320,139 367,115 388,88 388,111 396,111 380,122 373,122 418,92 426,111 447,121 463,100 487,104 523,107
568,79 575,86 586,98 561,103 576,119 589,105 562,132 555,141 620,103 637,100 640,90 643,116 686,100 680,122 787,101 779,123
729,133 757,132 686,136 44,104 79,111 94,110 33,122 51,129 20,129 15,136 45,142 44,150 53,164 21,174
100,145 124,147 155,144 185,146 171,159 216,147 333,159 344,153 364,145 376,161 403,175 421,157 457,170 501,151 527,143
535,157 540,165 538,173 541,183 555,175 514,185 513,198 534,176 793,154 734,160 731,169 722,165 730,177
102,181 108,176 130,175 139,193 113,202 78,211 35,206 43,206 657,186 690,185 729,198 748,187 764,179 765,188 766,198 768,212
449,195 456,208 486,206 494,192 501,211 495,216 433,215 449,215 461,215 410,222 443,231 476,232 380,231 362,217 319,220
321,210 329,210 306,207 299,216 589,213 602,219 637,219 671,207 684,209
158,226 165,219 184,225 189,241 207,237 209,233 211,229 219,252 62,240 126,241 138,249 32,245 47,264 41,278 39,287 18,286
253,264 288,286 224,284 212,295 207,302 207,307 184,300 143,291 125,284 109,281 88,294 123,318 198,324 218,339 209,344 186,344
172,353 131,362 272,317 324,326 328,350 289,362 25,318 22,323 55,325 58,331 17,344 47,359 68,360 120,383
318,258 327,260 330,262 335,272 384,275 371,294 380,309 398,281 407,275 417,263 410,315 410,342 440,321 456,308 475,303
452,271 449,256 463,260 474,275 488,275 486,326 517,286 545,286 514,352 507,359 501,364
573,318 601,287 623,297 625,275 644,258 652,245 698,254 685,269 702,300 723,236 728,249 747,245 755,299 788,243
612,327 607,336 628,332 629,338 624,342 652,339 663,321 678,328 691,350 708,336
542,362 578,361 586,363 620,377 633,370 656,374 683,374 724,374 747,395 715,399 792,388 613,390 606,398
362,386 393,377 423,392 442,371 449,372 454,370 455,378 453,382 460,383 461,376 474,372 484,371 476,380 474,384 469,401 336,410
275,381 295,370 293,380 318,381 320,368 273,397 282,409 278,417 283,414 254,412 132,405 157,405 169,404 171,404 184,408 195,403 207,408 209,401 169,431
32,411 25,412 75,422 82,424 79,436 82,448 42,438 502,411 514,430 509,425 515,438 521,441 526,438 535,444
443,440 460,432 467,433 377,434 377,441 398,454 410,472 475,474 501,476 523,477 526,467 548,465 556,454 555,464
604,415 600,423 591,431 630,437 630,446 629,453 625,461 685,443 732,427 792,475 735,485 648,479
19,467 41,467 48,482 20,481 39,504 19,514 202,464 200,473 199,477 173,471 239,476 247,471 287,464 285,466 312,488 291,489
276,501 264,511 262,517 99,497 103,482 117,486 118,492 130,492 132,493 142,492 192,491 159,506 126,511 123,514
93,551 151,548 176,540 200,543 92,585 123,580 167,573 177,586 203,575 197,589 180,595 114,605 122,602 42,552 25,560
27,597 17,608 150,615 162,618 157,619 147,628 147,637 139,657 231,642 255,664 295,569 261,561 254,570
364,497 389,498 375,510 363,498 367,527 366,522 381,531 389,524 372,541 363,538 396,541 348,552 340,565 352,584 372,596 377,576
431,552 447,536 437,517 433,518 442,545 419,564 417,575 412,581 467,541 462,558 467,580 476,582 465,596 483,517 486,515
321,526 508,505 542,534 549,523 551,515 517,575 521,595 529,596 547,560
596,482 607,530 613,529 614,514 615,541 618,566 602,578 595,593 588,610 588,629 589,622 561,579 562,593 560,602 560,615
638,553 650,525 657,546 667,545 676,527 683,515 692,504 700,497 628,596 641,591 667,576 684,569 675,591 699,573 736,577
711,608 692,618 704,625 723,610 724,592 657,624 658,635 723,653 702,662 632,655 633,662 637,687 765,554 790,514 783,597 791,604
338,620 330,616 325,631 357,637 400,645 415,656 429,632 318,653 386,677 347,680 359,692 364,692 380,692 388,692 408,692
423,695 295,670 312,685 440,692 443,697 444,707 442,715 445,720 456,672 472,664 520,624 524,624 512,667 549,664 548,673
554,678 513,692 534,695 536,703 521,718 531,720 549,721 577,714 587,710 590,701 587,700 583,725 671,692 690,692 697,692
31,648 22,711 41,711 34,728 30,735 99,740 109,747 113,748 95,765 142,716 143,729 143,740 125,680 113,686 108,687 114,692 135,684 134,705
202,697 194,695 208,697 233,730 166,748 154,775 160,775 183,776 217,764 224,783 144,797 51,789 72,783 82,801
303,740 318,725 310,735 312,760 328,754 372,736 378,771 424,755 478,779 488,760 487,751 496,756 496,757 505,759
413,796 435,791 436,797 471,780 481,797 486,790 526,792 528,798 566,779 568,786 562,789 564,786
609,755 643,749 645,774 643,780 664,779 702,740 705,747 711,759 712,761 747,710 720,713 746,752 777,741 792,731 774,776 773,783 744,797 724,780
`
  .trim()
  .split(/\s+/)
  .map((pair) => pair.split(',').map(Number));

const centers = [
  [-4, 2.5, 1],
  [0, 2.5, -1],
  [4, 2.5, 1],
  [-4, -2.5, -1],
  [0, -2.5, 1],
  [4, -2.5, -1],
];

const labelAt = (x: number, y: number) =>
  centers.reduce((best, [cx, cy, sign]) => {
    const value = sign * Math.max(0, 1 - Math.hypot(x - cx, y - cy) / 2);
    return Math.abs(value) > Math.abs(best) ? value : best;
  }, 0);

const TrainingPoints = () => (
  <Overlay width="270" height="270" viewBox="-5 -5 270 270">
    {points.map(([px, py], i) => {
      const x = (px - 15) / 3;
      const y = (py - 24) / 3;
      const value = labelAt((x / 260) * 12 - 6, 6 - (y / 260) * 12);
      return <circle key={i} cx={x} cy={y} r="3" fill={`rgb(${shade(value * 1.05).join()})`} stroke="#fff" strokeOpacity=".75" strokeWidth="1" />;
    })}
  </Overlay>
);

const ticks = Array.from({ length: 13 }, (_, i) => i - 6);

const AxisRight = () => (
  <SideAxis width="30" height="276" viewBox="0 -8 30 276" fontFamily="Liberation Sans, Arial" fontSize="9.5">
    {ticks.map((t) => {
      const y = 130 - (t * 260) / 12;
      return (
        <g key={t}>
          <path d={`M0,${Math.round(y)}.5h6`} stroke={t ? '#d6d6d6' : '#777'} />
          <text x="9" y={y + 3} fill={t ? '#bbb' : '#333'}>{t}</text>
        </g>
      );
    })}
  </SideAxis>
);

const AxisBottom = () => (
  <BaseAxis width="270" height="20" viewBox="-5 0 270 20" fontFamily="Liberation Sans, Arial" fontSize="9.5" textAnchor="middle">
    {ticks.map((t) => {
      const x = 130 + (t * 260) / 12;
      return (
        <g key={t}>
          <path d={`M${Math.floor(x)}.5,0v6`} stroke={t ? '#d6d6d6' : '#777'} />
          <text x={x} y="16" fill={t ? '#bbb' : '#333'}>{t}</text>
        </g>
      );
    })}
  </BaseAxis>
);

const LossChart = () => (
  <svg width="140" height="56" viewBox="1440 404 140 56" fill="none">
    <path d="M1444.500 406l.5 39.500 5 1.500 10 3.500 10 1.800 110 4.700" stroke="#999" strokeWidth="1.200" />
    <path d="M1445 410v36.500l3 1.500 10 2.800 7 1.400 12 1.200 20 1.200 30 1.700 13 .7h40" stroke="#000" strokeWidth="1.700" />
  </svg>
);

const Legend = () => (
  <LegendScale width="154" height="40" viewBox="-6 0 154 40" fontFamily="Liberation Sans, Arial" fontSize="10" textAnchor="middle" fill="#777">
    <defs>
      <linearGradient id="scale">
        {stops.map(([v, c]) => (
          <stop key={v} offset={(v + 1) / 2} stopColor={`rgb(${c.join()})`} />
        ))}
      </linearGradient>
    </defs>
    <rect x="0" y="8" width="144" height="10" fill="url(#scale)" />
    <path d="M.5 18v6M72.500 18v6M144.500 18v6" stroke="#666" />
    <text x="0" y="36">-1</text>
    <text x="72" y="36">0</text>
    <text x="144" y="36">1</text>
  </LegendScale>
);

const makeNoise = (seed: number) => {
  let s = seed;
  return () => {
    s = (s * 16807) % 2147483647;
    return s / 2147483647;
  };
};

const PlaneThumb = () => {
  const next = makeNoise(11);
  return (
    <svg width="34" height="34" viewBox="0 0 34 34" opacity=".3">
      {Array.from({ length: 190 }, (_, i) => {
        const x = next() * 34;
        const y = next() * 34;
        const c = shade((x + y - 34) / 26);
        return <rect key={i} x={x} y={y} width="1.300" height="1.300" fill={`rgb(${c.join()})`} />;
      })}
    </svg>
  );
};

const GaussThumb = () => (
  <svg width="34" height="34" viewBox="0 0 260 260">
    {points.map(([px, py], i) => {
      if (i % 3 === 0) return null;
      const x = (px - 15) / 3;
      const y = (py - 24) / 3;
      const v = labelAt((x / 260) * 12 - 6, 6 - (y / 260) * 12);
      return <rect key={i} x={x} y={y} width="8" height="8" fill={`rgb(${shade(v * 1.3).join()})`} />;
    })}
  </svg>
);

/* ----------------------------------------------------------------- app */

const selects: [string, string][] = [
  ['Learning rate', '0.01'],
  ['Activation', 'ReLU'],
  ['Regularization', 'L1'],
  ['Regularization rate', '0'],
  ['Problem type', 'Regression'],
];

const sliders: { text: string; at: number; top: number }[] = [
  { text: 'Ratio of training to\ntest data:  50%', at: 60, top: 21 },
  { text: 'Noise:  0', at: 0, top: 24 },
  { text: 'Batch size:  10', at: 37, top: 24 },
];

export default function App() {
  return (
    <Desktop>
      <GlobalStyle />
      <TopBar>
        <BarGroup>
          <BarText $track={0.2}>Activities</BarText>
          <BarIcon $gap={20}>
            <ChromeLogo size={15} />
          </BarIcon>
          <BarText $gap={7} $track={0.3}>Google Chrome</BarText>
          <Caret />
        </BarGroup>
        <Clock>
          Thu 19:41 <ClockDot />
        </Clock>
        <BarGroup $end>
          <DropboxMark />
          <BarText $gap={26}>en</BarText>
          <Caret />
          <BarIcon $gap={32}>
            <WifiMark />
          </BarIcon>
          <BarIcon $gap={11}>
            <VolumeMark />
          </BarIcon>
          <BarIcon $gap={15}>
            <BatteryMark />
          </BarIcon>
          <Caret $gap={13} />
        </BarGroup>
      </TopBar>
      <Workspace>
        <Dock>
          {dockItems.map((item, i) => (
            <DockItem key={i} $running={item.running} $active={item.active}>
              {item.icon}
            </DockItem>
          ))}
          <DockItem $last>
            <svg width="11" height="11" viewBox="0 0 11 11" fill="#e6e6e6">
              {[0, 4, 8].flatMap((x) => [0, 4, 8].map((y) => <rect key={`${x}${y}`} x={x} y={y} width="2" height="2" />))}
            </svg>
          </DockItem>
        </Dock>
        <Browser>
          <TabStrip>
            {tabs.map((tab) => (
              <TabBox key={tab.title} $active={tab.active}>
                {tab.icon}
                <TabTitle $track={tab.track}>{tab.title}</TabTitle>
                <CloseGlyph />
              </TabBox>
            ))}
            <NewTab>
              <svg width="12" height="12" viewBox="0 0 12 12" stroke="#fff" strokeWidth="1.800">
                <path d="M0 6h12M6 0v12" />
              </svg>
            </NewTab>
            <WindowButtons>
              <svg width="10" height="10" viewBox="0 0 10 10" stroke="#eee" strokeWidth="2">
                <path d="M0 9h10" />
              </svg>
              <svg width="11" height="10" viewBox="0 0 11 10" stroke="#eee" strokeWidth="1.500" fill="none">
                <path d="M4 1h6v5.500H4zM1 3v6.200h6" />
              </svg>
              <CloseGlyph size={10} color="#eee" />
            </WindowButtons>
          </TabStrip>
          <Toolbar>
            <NavSlot>
              <svg width="16" height="16" viewBox="0 0 16 16" stroke="#fff" strokeWidth="2" fill="none">
                <path d="M15 8H2M8 1.500L1.500 8 8 14.500" />
              </svg>
            </NavSlot>
            <NavSlot>
              <svg width="16" height="16" viewBox="0 0 16 16" stroke="#757575" strokeWidth="2" fill="none">
                <path d="M1 8h13M8 1.500L14.500 8 8 14.500" />
              </svg>
            </NavSlot>
            <NavSlot>
              <svg width="16" height="16" viewBox="0 0 16 16" stroke="#fff" strokeWidth="2" fill="none">
                <path d="M13.600 10A6 6 0 1 1 12.500 4L14 5.800" />
                <path d="M15 1v6H9z" fill="#fff" stroke="none" />
              </svg>
            </NavSlot>
            <NavSlot>
              <svg width="18" height="17" viewBox="0 0 18 17" stroke="#fff" strokeWidth="2" fill="none">
                <path d="M1.500 9L9 1.800 16.500 9M4.200 7.500V15.500h9.600V7.500" />
              </svg>
            </NavSlot>
            <Omnibox>
              <svg width="12" height="14" viewBox="0 0 12 14">
                <path d="M3 6V4a3 3 0 0 1 6 0v2" fill="none" stroke="#5f6368" strokeWidth="1.500" />
                <rect x="1.500" y="5.500" width="9" height="7.500" rx="1" fill="#5f6368" />
              </svg>
              <Url>
                <Host>playground.tensorflow.org</Host>
                /#activation=relu&amp;regularization=L1&amp;batchSize=10&amp;dataset=circle&amp;regDataset=reg-gauss&amp;learningRate=0.01&amp;regularizationRate=0&amp;n…
              </Url>
              <svg width="15" height="15" viewBox="0 0 16 16" fill="none" stroke="#5f6368" strokeWidth="1.500">
                <path d="M8 1.500l1.900 4.400 4.800.4-3.600 3.200 1.100 4.700L8 11.700l-4.200 2.500 1.100-4.700L1.300 6.300l4.800-.4z" />
              </svg>
            </Omnibox>
            <Extensions>
              {extensions.map((icon, i) => (
                <ExtSlot key={i}>{icon}</ExtSlot>
              ))}
            </Extensions>
            <ToolbarRule />
            <Avatar>C</Avatar>
            <NavSlot $gap={6}>
              <svg width="4" height="16" viewBox="0 0 4 16" fill="#fff">
                <circle cx="2" cy="2.500" r="1.600" />
                <circle cx="2" cy="8" r="1.600" />
                <circle cx="2" cy="13.500" r="1.600" />
              </svg>
            </NavSlot>
          </Toolbar>
          <Viewport>
            <Page>
              <Hero>Don’t Worry, You Can’t Break It. We Promise.</Hero>
              <Controls>
                <Timeline>
                  <svg width="24" height="24" viewBox="0 0 24 24" fill="#222">
                    <path d="M12 5V1L7 6l5 5V7c3.310 0 6 2.690 6 6s-2.690 6-6 6-6-2.690-6-6H4c0 4.420 3.580 8 8 8s8-3.580 8-8-3.580-8-8-8z" />
                  </svg>
                  <PlayButton>
                    <svg width="36" height="36" viewBox="0 0 24 24" fill="#fff">
                      <path d="M8 5v14l11-7z" />
                    </svg>
                  </PlayButton>
                  <svg width="24" height="24" viewBox="0 0 24 24" fill="#222">
                    <path d="M6 18l8.500-6L6 6v12zM16 6v12h2V6h-2z" />
                  </svg>
                </Timeline>
                <Field>
                  <FieldLabel>Epoch</FieldLabel>
                  <Epoch>000,388</Epoch>
                </Field>
                {selects.map(([label, value]) => (
                  <Field key={label}>
                    <FieldLabel>{label}</FieldLabel>
                    <Select>
                      {value}
                      <SelectCaret />
                    </Select>
                  </Field>
                ))}
              </Controls>
              <Main>
                <DataColumn>
                  <ColumnTitle>DATA</ColumnTitle>
                  <Hint>
                    Which dataset do
                    <br />
                    you want to use?
                  </Hint>
                  <Thumbs>
                    <Thumb>
                      <PlaneThumb />
                    </Thumb>
                    <Thumb $on>
                      <GaussThumb />
                    </Thumb>
                  </Thumbs>
                  {sliders.map((s) => (
                    <SliderBlock key={s.text} $top={s.top}>
                      {s.text}
                      <Track $at={s.at}>
                        <Knob $at={s.at} />
                      </Track>
                    </SliderBlock>
                  ))}
                  <Regenerate>REGENERATE</Regenerate>
                </DataColumn>
                <NetworkArea>
                  <NetworkHead>
                    <FeatureHead>
                      <ColumnTitle>FEATURES</ColumnTitle>
                      <Hint>
                        Which properties do
                        <br />
                        you want to feed in?
                      </Hint>
                    </FeatureHead>
                    <HiddenHead>
                      <LayerControls>
                        <RoundButton $gap={8}>
                          <Plus />
                        </RoundButton>
                        <RoundButton $gap={16}>
                          <Minus />
                        </RoundButton>
                        {'1  '}
                        <BarText $gap={3}>HIDDEN LAYER</BarText>
                      </LayerControls>
                      <Bracket />
                      <NeuronControls>
                        <RoundButton $gap={5}>
                          <Plus />
                        </RoundButton>
                        <RoundButton>
                          <Minus />
                        </RoundButton>
                      </NeuronControls>
                      <NeuronCount>8 neurons</NeuronCount>
                    </HiddenHead>
                  </NetworkHead>
                  <NetworkLinks />
                  {features.map((f, i) => (
                    <React.Fragment key={i}>
                      <FeatureTag $y={181 + i * ROW} $on={f.on}>
                        {f.label}
                      </FeatureTag>
                      <FeatureNode $y={181 + i * ROW} $on={f.on} $fill={f.fill} />
                    </React.Fragment>
                  ))}
                  {neurons.map((n, i) => (
                    <React.Fragment key={i}>
                      <NeuronNode $y={181 + i * ROW} $fill={n.fill} />
                      <Bias $y={181 + i * ROW} $color={n.bias} />
                    </React.Fragment>
                  ))}
                  <CalloutArrow width="20" height="34" viewBox="973 905 20 34" fill="none">
                    <path d="M985 937Q973 924 983 910" stroke="#777" />
                    <path d="M985 908l-5 2 4 4z" fill="#777" />
                  </CalloutArrow>
                  <Callout>
                    This is the output
                    <br />
                    from one <b>neuron</b>.
                    <br />
                    Hover to see it
                    <br />
                    larger.
                  </Callout>
                </NetworkArea>
                <OutputColumn>
                  <ColumnTitle>OUTPUT</ColumnTitle>
                  <LossRow>
                    <Losses>
                      <TestLoss>Test loss 0.022</TestLoss>
                      Training loss 0.022
                    </Losses>
                    <LossPlot>
                      <LossChart />
                    </LossPlot>
                  </LossRow>
                  <PlotRow>
                    <Plot>
                      <Heatmap />
                      <TrainingPoints />
                    </Plot>
                    <AxisRight />
                  </PlotRow>
                  <AxisBottom />
                  <LegendRow>
                    <LegendText>
                      Colors shows
                      <br />
                      data, neuron and
                      <br />
                      weight values.
                    </LegendText>
                    <Legend />
                  </LegendRow>
                  <Checks>
                    <Check $w={133}>
                      <Box />
                      Show test data
                    </Check>
                    <Check $w={130}>
                      <Box />
                      Discretize output
                    </Check>
                  </Checks>
                </OutputColumn>
              </Main>
              <Article>
                Um, What Is a Neural Network?
                <MoreButton>
                  <svg width="12" height="8" viewBox="0 0 12 8" fill="none" stroke="#111" strokeWidth="2">
                    <path d="M1 1.200l5 5 5-5" />
                  </svg>
                </MoreButton>
              </Article>
            </Page>
            <ScrollBar>
              <ScrollArrow />
              <ScrollThumb />
              <ScrollArrow $down />
            </ScrollBar>
          </Viewport>
        </Browser>
      </Workspace>
    </Desktop>
  );
}
